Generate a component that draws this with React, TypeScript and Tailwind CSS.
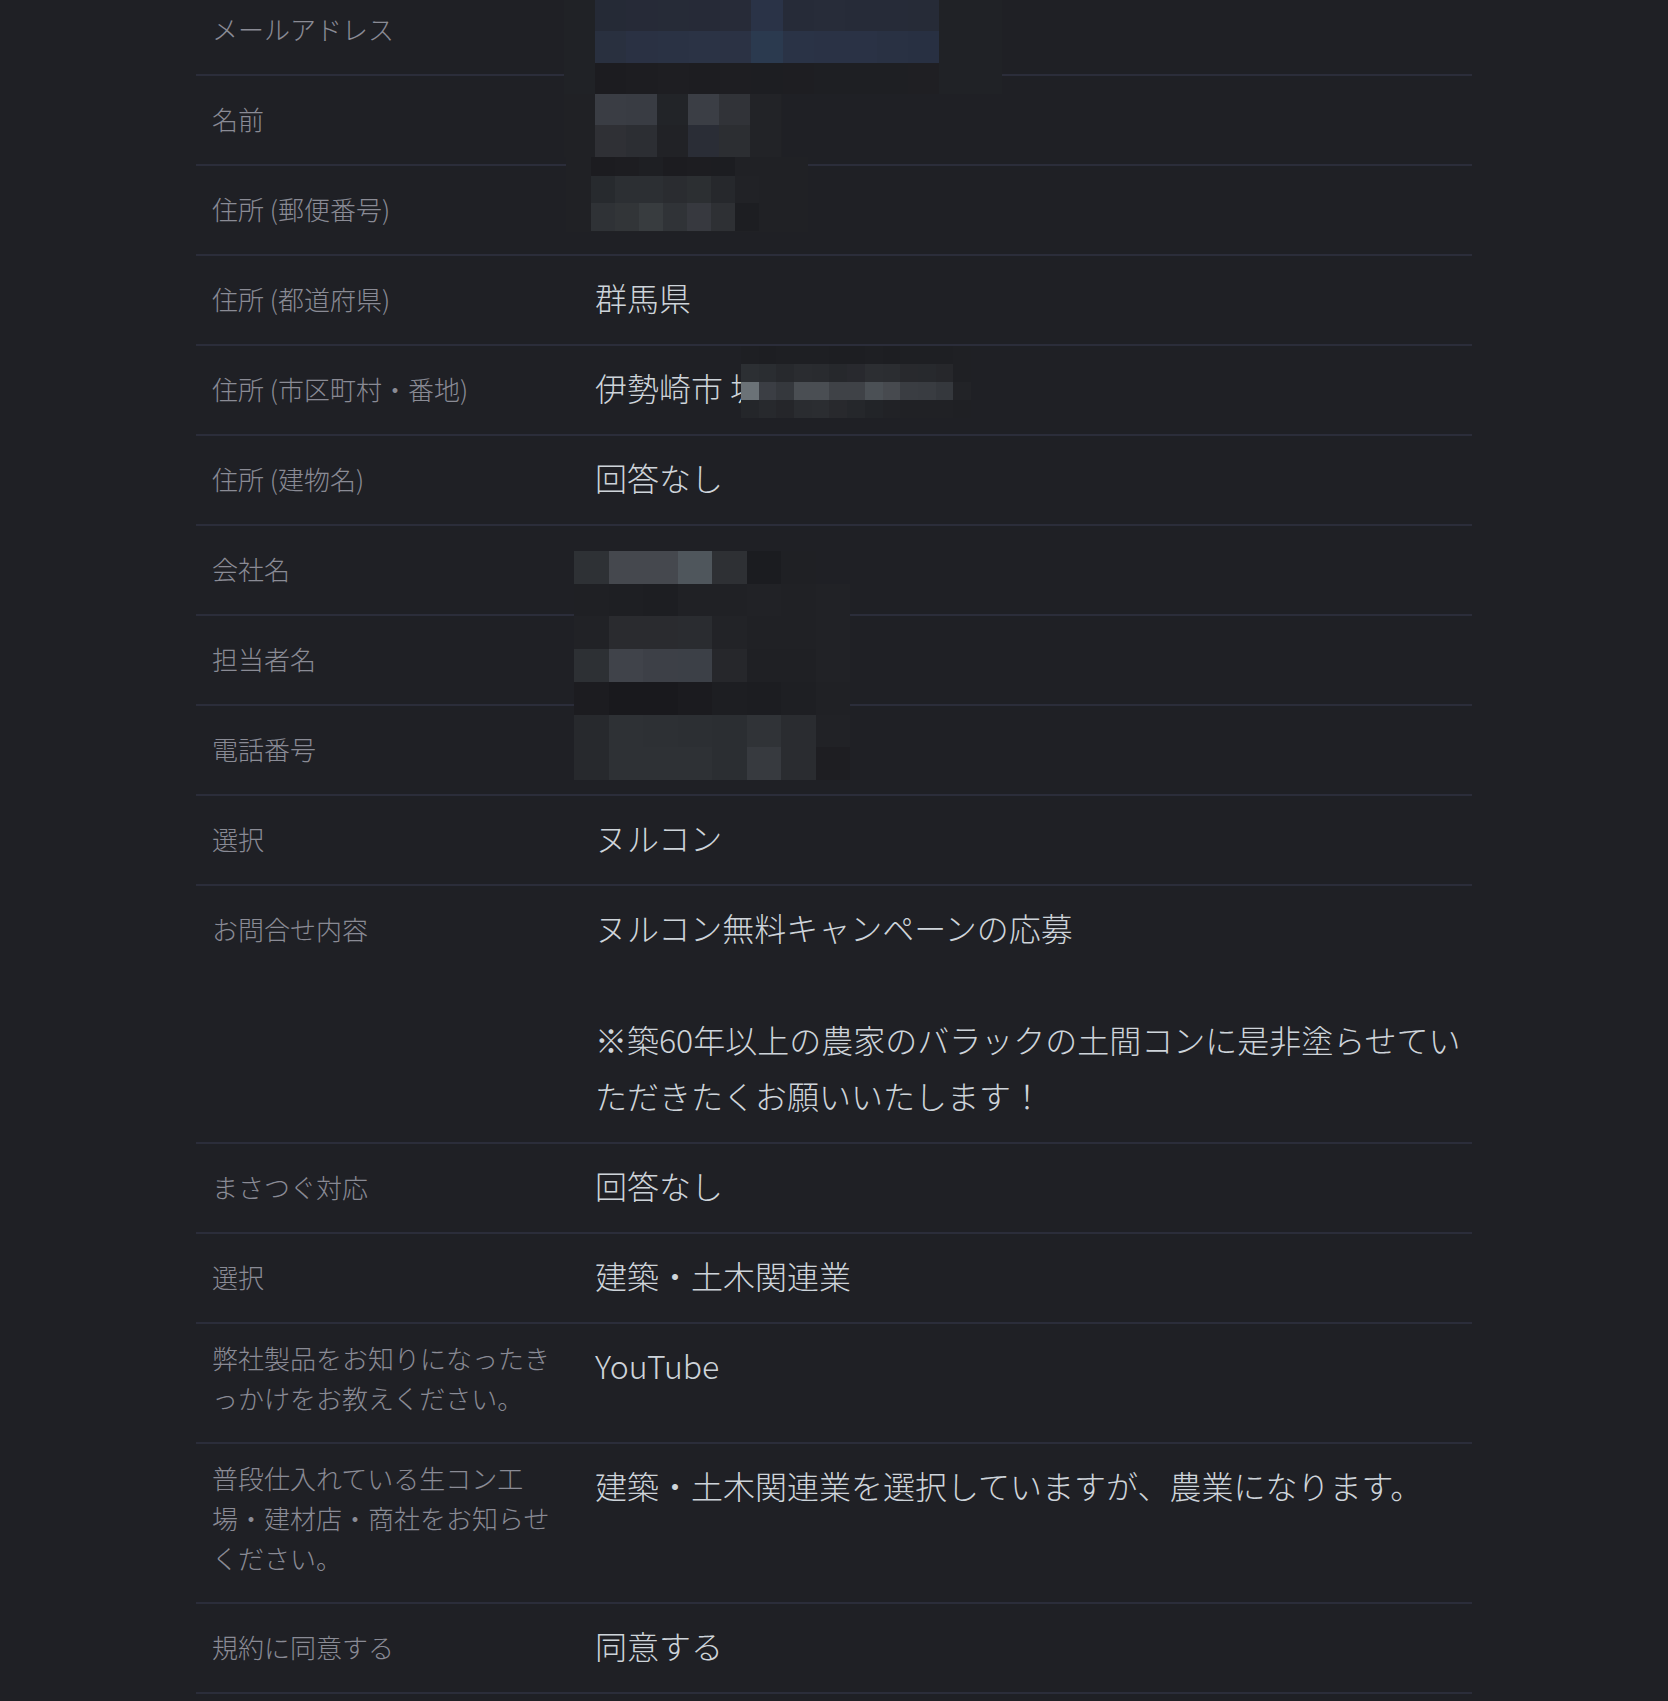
import React from 'react';

type Row = { label: React.ReactNode; value?: React.ReactNode; multi?: boolean };

const ROWS: Row[] = [
  { label: 'メールアドレス' },
  { label: '名前' },
  { label: '住所 (郵便番号)' },
  { label: '住所 (都道府県)', value: '群馬県' },
  { label: '住所 (市区町村・番地)', value: '伊勢崎市 坂' },
  { label: '住所 (建物名)', value: '回答なし' },
  { label: '会社名' },
  { label: '担当者名' },
  { label: '電話番号' },
  { label: '選択', value: 'ヌルコン' },
  {
    label: 'お問合せ内容',
    value: (
      <>
        ヌルコン無料キャンペーンの応募
        <br />
        <br />
        ※築60年以上の農家のバラックの土間コンに是非塗らせてい
        <br />
        ただきたくお願いいたします！
      </>
    ),
  },
  { label: 'まさつぐ対応', value: '回答なし' },
  { label: '選択', value: '建築・土木関連業' },
  {
    label: (
      <>
        弊社製品をお知りになったき
        <br />
        っかけをお教えください。
      </>
    ),
    value: 'YouTube',
    multi: true,
  },
  {
    label: (
      <>
        普段仕入れている生コン工
        <br />
        場・建材店・商社をお知らせ
        <br />
        ください。
      </>
    ),
    value: '建築・土木関連業を選択していますが、農業になります。',
    multi: true,
  },
  { label: '規約に同意する', value: '同意する' },
];

// モザイク（個人情報の伏せ字）
type MosaicProps = { x: number; y: number; cw: number; rows: number[]; cells: string[][] };

const Mosaic: React.FC<MosaicProps> = ({ x, y, cw, rows, cells }) => (
  <div
    className="absolute grid"
    style={{
      left: x,
      top: y,
      gridTemplateColumns: `repeat(${cells[0].length}, ${cw}px)`,
      gridTemplateRows: rows.map((h) => `${h}px`).join(' '),
    }}
  >
    {cells.flat().map((c, i) => (
      <div key={i} style={{ backgroundColor: c }} />
    ))}
  </div>
);

const MOSAICS: MosaicProps[] = [
  // メール halo
  { x: 564, y: 0, cw: 438, rows: [94], cells: [['#202226']] },
  {
    x: 595,
    y: 0,
    cw: 31.3,
    rows: [31, 32, 31],
    cells: [
      ['#252a36', '#262a37', '#262b37', '#262a37', '#272b38', '#2a3347', '#262b38', '#272c39', '#262b38', '#262b38', '#262b37'],
      ['#29303f', '#2a3143', '#2a3244', '#2b3345', '#2b3244', '#2b3a4f', '#2a3346', '#2a3245', '#2a3245', '#293143', '#283042'],
      ['#1c1c20', '#1d1d21', '#1e1e22', '#1d1d21', '#1e1e22', '#1d1e22', '#1e1e22', '#1e1f23', '#1e1f23', '#1e1f23', '#1f1f23'],
    ],
  },
  // 名前
  { x: 564, y: 94, cw: 218, rows: [63], cells: [['#202125']] },
  {
    x: 595,
    y: 94,
    cw: 31,
    rows: [31, 32],
    cells: [
      ['#3a3d44', '#393c43', '#222428', '#3b3e45', '#313338', '#222327'],
      ['#2f3035', '#2c2e33', '#212226', '#2a2d36', '#2c2e32', '#222327'],
    ],
  },
  // 郵便番号
  { x: 566, y: 157, cw: 242, rows: [75], cells: [['#202125']] },
  {
    x: 591,
    y: 157,
    cw: 24,
    rows: [19, 27, 28],
    cells: [
      ['#1c1c20', '#1d1d21', '#1e1f23', '#1c1c20', '#1d1d21', '#1c1d21', '#202125'],
      ['#272a2e', '#2c2f33', '#2c2f33', '#2a2c30', '#2c2f32', '#26282c', '#212226'],
      ['#2f3236', '#323538', '#383c3f', '#303337', '#37393f', '#2e3034', '#1d1e22'],
    ],
  },
  // 番地
  {
    x: 741,
    y: 346,
    cw: 17.7,
    rows: [18, 18, 18, 18],
    cells: [
      ['#1e1f23', '#1d1e22', '#1e1f23', '#1e1f23', '#1e1f23', '#1d1e22', '#1d1e22', '#1e1f23', '#1d1e22', '#1e1f23', '#1e1f23', '#1e1f23', '#1f2024'],
      ['#2c2f33', '#2a2d31', '#27292d', '#2a2c30', '#292b2f', '#26282c', '#28292e', '#2c2e32', '#2b2d31', '#28292d', '#27292d', '#26272b', '#1f2024'],
      ['#6b7277', '#3b3e44', '#35383d', '#4a4e53', '#4a4e53', '#3f4247', '#3f4247', '#4b5055', '#474a4f', '#3a3d42', '#393c41', '#35383d', '#222327'],
      ['#24262a', '#27292d', '#25262a', '#2a2c30', '#2b2d31', '#28292d', '#25272b', '#222428', '#212226', '#202125', '#202125', '#202125', '#1f2024'],
    ],
  },
  // 会社名・担当者名・電話番号
  {
    x: 574,
    y: 551,
    cw: 34.5,
    rows: [33, 32, 33, 33, 33, 32, 33],
    cells: [
      ['#2e3135', '#45484e', '#45484e', '#4f565c', '#2e3034', '#1b1c20', '#1f2024', '#1f2025'],
      ['#1f2024', '#1e1f23', '#1d1e22', '#202125', '#202125', '#212226', '#202125', '#212226'],
      ['#212226', '#2a2b2f', '#2a2b2f', '#2a2c30', '#222327', '#202125', '#202125', '#212226'],
      ['#2d3034', '#40434a', '#3d4047', '#3c4047', '#26272b', '#1f2024', '#1f2024', '#212226'],
      ['#1c1c20', '#19191d', '#19191d', '#1b1b1f', '#1d1e22', '#1c1d21', '#1e1f23', '#202125'],
      ['#27292d', '#2e3135', '#2d3034', '#2c2f33', '#2b2e32', '#303337', '#2a2c30', '#212226'],
      ['#27292d', '#2e3135', '#2e3135', '#2e3135', '#2b2e32', '#373a3f', '#2a2c30', '#1e1e22'],
    ],
  },
];

const App: React.FC = () => {
  return (
    <div className="relative min-h-screen overflow-hidden bg-[#1f2025] font-['Noto_Sans_CJK_JP','Noto_Sans',sans-serif] font-light">
      <div className="mx-auto -mt-[14px] w-[1276px]">
        {ROWS.map((r, i) => (
          <div key={i} className="flex items-start border-b-2 border-[#2b2d3a] pl-4">
            <div
              className={`w-[383px] shrink-0 text-[26px] leading-[40px] text-[#8a8b95] ${
                r.multi ? 'pt-[14px] pb-[24px]' : 'pt-[15px] pb-[17px]'
              }`}
            >
              <div className="flex min-h-[56px] items-center">
                <div>{r.label}</div>
              </div>
            </div>
            <div className="min-h-[88px] flex-1 pt-[13px] pb-[19px] text-[32px] leading-[56px] text-[#ced4da]">
              {r.value}
            </div>
          </div>
        ))}
      </div>

      {MOSAICS.map((m, i) => (
        <Mosaic key={i} {...m} />
      ))}
    </div>
  );
};

export default App;
